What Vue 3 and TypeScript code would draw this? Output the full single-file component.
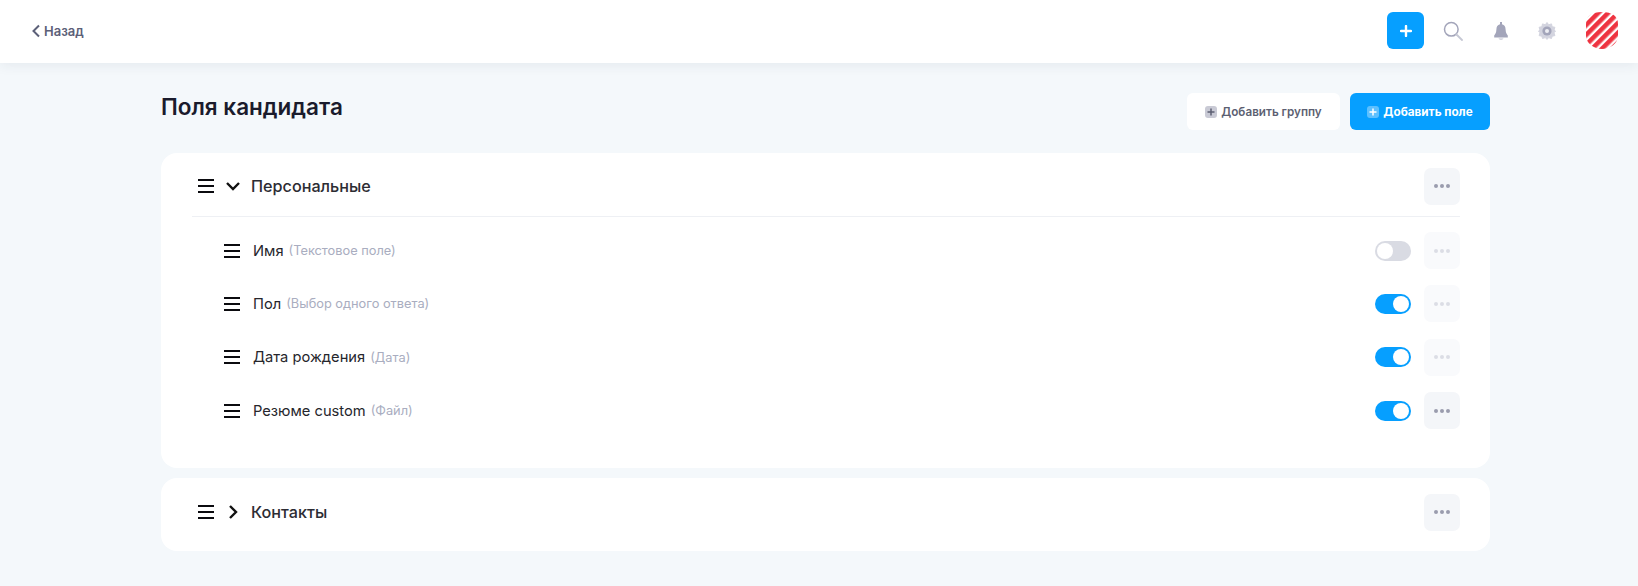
<script setup lang="ts">
interface Field { name: string; type: string; on: boolean; active: boolean }
const fields: Field[] = [
  { name: 'Имя', type: '(Текстовое поле)', on: false, active: false },
  { name: 'Пол', type: '(Выбор одного ответа)', on: true, active: false },
  { name: 'Дата рождения', type: '(Дата)', on: true, active: false },
  { name: 'Резюме custom', type: '(Файл)', on: true, active: true },
]
</script>

<template>
  <div class="page">
    <header class="topbar">
      <a class="back">
        <svg width="10" height="14" viewBox="0 0 10 14"><path d="M8 1.500 2.500 7 8 12.500" fill="none" stroke="#5c6078" stroke-width="2" /></svg>
        <span>Назад</span>
      </a>
      <div class="tools">
        <button class="add-square">
          <svg width="12" height="12" viewBox="0 0 12 12"><path d="M6 1v10M1 6h10" stroke="#fff" stroke-width="2.400" stroke-linecap="round" /></svg>
        </button>
        <svg class="search" width="20" height="20" viewBox="0 0 20 20"><circle cx="8.300" cy="8.300" r="6.800" fill="none" stroke="#a3a5ba" stroke-width="1.500" /><path d="m13.500 13.500 5.500 5.500" stroke="#c6c8d4" stroke-width="1.800" stroke-linecap="round" /></svg>
        <svg class="bell" width="16" height="20" viewBox="0 0 16 20"><path d="M7 1h2v2.200c2.500.6 3.500 2.600 3.600 5.200.1 2.800.9 4.600 2.200 6v2.100H1.200v-2.100c1.300-1.400 2.100-3.200 2.200-6 .1-2.600 1.100-4.600 3.600-5.200z" fill="#a3a5ba" /><path d="M5.500 17.200h5c-.4 1.100-1.300 1.800-2.500 1.800s-2.100-.7-2.500-1.800z" fill="#d5d6e0" /></svg>
        <svg class="gear" width="20" height="20" viewBox="0 0 20 20"><path d="M10 1.500l1.700 2.300 2.800-.9.600 2.800 2.800.6-.9 2.800 1.500 1-1.500 1.700.9 2.800-2.800.6-.6 2.300-2.800-.9-1.700 1.800-1.700-1.800-2.800.9-.6-2.300-2.800-.6.9-2.800-1.500-1.700 1.500-1-.9-2.800 2.800-.6.6-2.800 2.800.9z" fill="#d3d4df" stroke="#d3d4df" stroke-linejoin="round" /><circle cx="10" cy="10" r="4.600" fill="#a3a5ba" /><circle cx="10" cy="10" r="2" fill="#eceef3" /></svg>
        <svg class="avatar" width="32" height="37" viewBox="0 0 32 37">
          <defs>
            <pattern id="stripes" width="7" height="7" patternUnits="userSpaceOnUse" patternTransform="rotate(45)">
              <rect width="7" height="7" fill="#fff" />
              <rect width="4.600" height="7" fill="#ee3340" />
            </pattern>
          </defs>
          <path d="M16 0C26 0 32 4 32 12V24C32 31 24 37 16 37 8 37 0 31 0 24V12C0 4 6 0 16 0z" fill="url(#stripes)" />
        </svg>
      </div>
    </header>

    <main class="content">
      <div class="title-row">
        <h1>Поля кандидата</h1>
        <div class="actions">
          <button class="btn btn-light">
            <span class="plus-box"><svg width="8" height="8" viewBox="0 0 8 8"><path d="M4 .5v7M.5 4h7" stroke="#5c5f72" stroke-width="1.500" /></svg></span>
            Добавить группу
          </button>
          <button class="btn btn-blue">
            <span class="plus-box"><svg width="8" height="8" viewBox="0 0 8 8"><path d="M4 .5v7M.5 4h7" stroke="#fff" stroke-width="1.500" /></svg></span>
            Добавить поле
          </button>
        </div>
      </div>

      <section class="card card-open">
        <div class="group-head ruled">
          <span class="burger"><i></i><i></i><i></i></span>
          <svg class="chev" width="16" height="16" viewBox="0 0 16 16"><path d="M2 5 8 11 14 5" fill="none" stroke="#111" stroke-width="2.400" /></svg>
          <span class="group-name">Персональные</span>
          <button class="more"><b></b><b></b><b></b></button>
        </div>
        <div class="rows">
          <div v-for="f in fields" :key="f.name" class="row">
            <span class="burger"><i></i><i></i><i></i></span>
            <span class="field-name">{{ f.name }}</span>
            <span class="field-type">{{ f.type }}</span>
            <span class="toggle" :class="{ on: f.on }"><em></em></span>
            <button class="more" :class="{ faded: !f.active }"><b></b><b></b><b></b></button>
          </div>
        </div>
      </section>

      <section class="card card-closed">
        <div class="group-head">
          <span class="burger"><i></i><i></i><i></i></span>
          <svg class="chev" width="16" height="16" viewBox="0 0 16 16"><path d="M5 2 11 8 5 14" fill="none" stroke="#111" stroke-width="2.400" /></svg>
          <span class="group-name">Контакты</span>
          <button class="more"><b></b><b></b><b></b></button>
        </div>
      </section>
    </main>
  </div>
</template>

<style>
html, body { margin: 0; background: #f4f8fb; }
</style>

<style scoped>
.page {
  width: 1638px;
  height: 586px;
  overflow: hidden;
  background: #f4f8fb;
  font-family: Inter, "Noto Sans", sans-serif;
  color: #1c1c2a;
}
button { border: 0; padding: 0; font: inherit; cursor: pointer; }
.topbar {
  height: 63px;
  box-sizing: border-box;
  background: #fff;
  box-shadow: 0 2px 12px rgba(40, 50, 80, 0.08);
  display: flex;
  align-items: center;
  justify-content: space-between;
  padding: 0 20px 2px 31px;
}
.back {
  display: flex;
  align-items: center;
  gap: 3px;
  font-size: 13px;
  font-weight: 600;
  color: #5c6078;
}
.tools { display: flex; align-items: center; }
.add-square {
  width: 37px;
  height: 37px;
  border-radius: 6px;
  background: #069fff;
  display: flex;
  align-items: center;
  justify-content: center;
}
.search { margin-left: 19px; }
.bell { margin-left: 30px; }
.gear { margin-left: 28px; }
.avatar { margin-left: 29px; }
.content { padding: 0 148px 0 161px; }
.title-row {
  height: 90px;
  display: flex;
  justify-content: space-between;
  align-items: flex-start;
}
h1 {
  margin: 31px 0 0;
  font-size: 22.500px;
  line-height: 26px;
  font-weight: 600;
  color: #1a1b2c;
}
.actions { display: flex; gap: 10px; margin-top: 30px; }
.btn {
  height: 37px;
  border-radius: 6px;
  display: flex;
  align-items: center;
  justify-content: center;
  gap: 4px;
  font-size: 11.700px;
  font-weight: 600;
}
.btn-light { width: 153px; background: #fff; color: #5c5f72; }
.btn-blue { width: 140px; background: #069fff; color: #fff; font-weight: 700; }
.plus-box {
  width: 12px;
  height: 12px;
  border-radius: 3px;
  display: flex;
  align-items: center;
  justify-content: center;
}
.btn-light .plus-box { background: #c9cad5; }
.btn-blue .plus-box { background: rgba(255, 255, 255, 0.35); }
.card {
  background: #fff;
  border-radius: 16px;
  padding: 0 30px 0 29px;
}
.card-open { height: 315px; margin-bottom: 10px; box-sizing: border-box; }
.card-closed { height: 73px; box-sizing: border-box; }
.group-head {
  display: flex;
  align-items: center;
  height: 64px;
  box-sizing: border-box;
  padding: 0 0 0 8px;
}
.ruled { padding-top: 3px; border-bottom: 1px solid #eef0f4; margin-left: 2px; padding-left: 6px; }
.card-closed .group-head { height: 73px; padding-bottom: 5px; }
.burger {
  width: 16px;
  height: 14px;
  display: flex;
  flex-direction: column;
  justify-content: space-between;
  flex: none;
}
.burger i { display: block; height: 2px; background: #0b0b0f; }
.chev { margin-left: 11px; flex: none; }
.group-name {
  margin-left: 10px;
  font-size: 16.200px;
  font-weight: 500;
  color: #2c2c33;
  flex: 1;
}
.more {
  width: 36px;
  height: 37px;
  border-radius: 7px;
  background: #f4f6f9;
  display: flex;
  align-items: center;
  justify-content: center;
  gap: 2px;
  flex: none;
}
.more b { width: 4px; height: 4px; border-radius: 50%; background: #9a9cae; }
.more.faded { background: #f9fafc; }
.more.faded b { background: #dcdde5; }
.rows { padding-top: 15px; }
.row {
  display: flex;
  align-items: center;
  height: 37px;
  margin-bottom: 16.400px;
  padding-left: 34px;
}
.field-name { margin-left: 13px; font-size: 14.700px; color: #26262c; }
.field-type { margin-left: 5px; font-size: 12.800px; color: #a9adc0; flex: 1; }
.toggle {
  width: 36px;
  height: 20px;
  border-radius: 10px;
  background: #d9dbe3;
  margin-right: 13px;
  box-sizing: border-box;
  padding: 2px;
  display: flex;
}
.toggle em { width: 16px; height: 16px; border-radius: 50%; background: #fff; }
.toggle.on { background: #069fff; justify-content: flex-end; }
</style>
